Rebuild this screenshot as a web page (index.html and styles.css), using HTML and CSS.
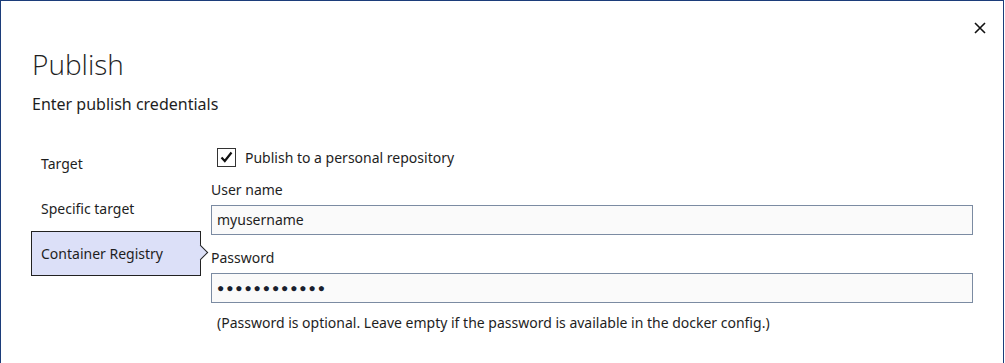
FILE: index.html
```html
<!DOCTYPE html>
<html>
<head>
<meta charset="utf-8">
<link rel="stylesheet" href="styles.css">
</head>
<body>
<div class="dialog">
  <button class="close" aria-label="Close">
    <svg width="12" height="12" viewBox="0 0 12 12"><path d="M1 1 L11 11 M11 1 L1 11" stroke="#111" stroke-width="1.6" fill="none"/></svg>
  </button>
  <header class="head">
    <h1 class="title">Publish</h1>
    <p class="subtitle">Enter publish credentials</p>
  </header>
  <div class="main">
    <nav class="nav">
      <div class="nav-item">Target</div>
      <div class="nav-item">Specific target</div>
      <div class="nav-item selected">Container Registry</div>
    </nav>
    <div class="form">
      <label class="check-row">
        <span class="checkbox">
          <svg width="13" height="12" viewBox="0 0 13 12"><path d="M1.5 6.5 L4.8 10 L11.5 1.5" stroke="#111" stroke-width="2.2" fill="none"/></svg>
        </span>
        <span>Publish to a personal repository</span>
      </label>
      <div class="label first">User name</div>
      <div class="input">myusername</div>
      <div class="label second">Password</div>
      <div class="input dots">●●●●●●●●●●●●</div>
      <div class="note">(Password is optional. Leave empty if the password is available in the docker config.)</div>
    </div>
  </div>
</div>
</body>
</html>
```

FILE: styles.css
```css
* { box-sizing: border-box; }
html, body { margin: 0; padding: 0; background: #fff; }
body {
  font-family: "Noto Sans", "Open Sans", sans-serif;
  font-size: 14px;
  color: #1e1e1e;
}
.dialog {
  position: relative;
  width: 1004px;
  height: 363px;
  border: 1px solid #1c3d7a;
  border-bottom: none;
  background: #fff;
}
.close {
  position: absolute;
  top: 20px;
  right: 16px;
  width: 14px;
  height: 14px;
  padding: 0;
  border: none;
  background: none;
  display: flex;
  align-items: center;
  justify-content: center;
}
.head {
  padding: 43px 0 0 31px;
}
.title {
  margin: 0;
  font-family: "Open Sans", sans-serif;
  font-weight: 300;
  font-size: 28px;
  line-height: 40px;
  color: #1e1e1e;
}
.subtitle {
  margin: 9px 0 0 0;
  font-size: 16px;
  line-height: 22px;
}
.main {
  display: flex;
  gap: 10px;
  padding: 20px 30px 0 30px;
}
.nav {
  width: 170px;
  flex: none;
  padding-top: 6px;
}
.nav-item {
  position: relative;
  height: 45px;
  line-height: 43px;
  padding-left: 9px;
  border: 1px solid transparent;
  white-space: nowrap;
}
.nav-item.selected {
  background: #dce0f8;
  border-color: #222;
}
.nav-item.selected::after {
  content: "";
  position: absolute;
  right: -6px;
  top: 15px;
  width: 10px;
  height: 10px;
  background: #dce0f8;
  border-top: 1px solid #222;
  border-right: 1px solid #222;
  transform: rotate(45deg);
}
.form {
  flex: 1;
  display: flex;
  flex-direction: column;
}
.check-row {
  display: flex;
  align-items: center;
  gap: 9px;
  margin-left: 6px;
  height: 20px;
  margin-top: 12px;
}
.checkbox {
  width: 19px;
  height: 19px;
  border: 1px solid #333;
  display: flex;
  align-items: center;
  justify-content: center;
  background: #fff;
}
.label {
  line-height: 20px;
  height: 20px;
}
.label.first { margin-top: 13px; }
.label.second { margin-top: 13px; }
.input {
  margin-top: 5px;
  height: 30px;
  border: 1px solid #7b8ba2;
  background: #fafafa;
  padding-left: 5px;
  line-height: 28px;
}
.dots {
  font-size: 12px;
  letter-spacing: 1.9px;
  color: #1a1f2e;
}
.note {
  margin-top: 10px;
  margin-left: 6px;
  line-height: 20px;
}
```
